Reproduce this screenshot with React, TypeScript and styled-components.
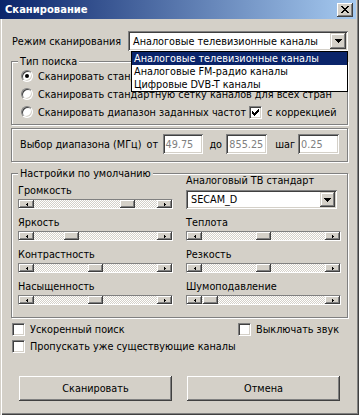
import React from 'react'
import styled, { createGlobalStyle } from 'styled-components'

const face = '#d4d0c8'
const shadow = '#808080'
const dark = '#404040'

const raised = `box-shadow: inset -1px -1px ${dark}, inset 1px 1px #fff, inset -2px -2px ${shadow};`
const sunken = `box-shadow: inset 1px 1px ${shadow}, inset -1px -1px #fff, inset 2px 2px ${dark}, inset -2px -2px ${face};`

const GlobalStyle = createGlobalStyle`
  html, body {
    margin: 0;
    padding: 0;
    background: #fff;
  }
  body {
    font-family: 'DejaVu Sans', sans-serif;
    font-size: 9.7px;
    color: #000;
    white-space: nowrap;
  }
  * {
    box-sizing: border-box;
  }
`

const Window = styled.div`
  width: 359px;
  height: 415px;
  padding: 0 3px 3px 0;
  background: ${face};
  box-shadow: inset 1px 0 ${face}, inset 2px 0 #fff, inset -1px -1px ${dark}, inset -2px -2px ${shadow};
  display: flex;
  flex-direction: column;
`

const TitleBar = styled.div`
  height: 19px;
  padding: 0 3px 0 5px;
  display: flex;
  align-items: center;
  background: linear-gradient(90deg, #0a246a, #a6caf0);
`

const TitleText = styled.span`
  color: #fff;
  font-weight: bold;
  font-size: 10px;
`

const CloseButton = styled.div`
  margin-left: auto;
  width: 16px;
  height: 14px;
  background: ${face};
  ${raised}
  display: flex;
  align-items: center;
  justify-content: center;
`

const ModeRow = styled.div`
  margin-top: 12px;
  padding-left: 12px;
  display: flex;
  align-items: center;
`

const ModeLabel = styled.span`
  width: 116px;
`

const Combo = styled.div<{ $width: number; $height: number }>`
  position: relative;
  width: ${({ $width }) => $width}px;
  height: ${({ $height }) => $height}px;
  padding: 2px 2px 2px 5px;
  background: #fff;
  ${sunken}
  display: flex;
  align-items: center;
`

const ComboText = styled.span`
  flex: 1;
`

const ComboButton = styled.div<{ $size: number }>`
  width: ${({ $size }) => $size}px;
  height: ${({ $size }) => $size}px;
  background: ${face};
  box-shadow: inset -1px -1px ${dark}, inset 1px 1px ${face}, inset -2px -2px ${shadow}, inset 2px 2px #fff;
  display: flex;
  align-items: center;
  justify-content: center;
`

const DropList = styled.div`
  position: absolute;
  top: 100%;
  left: 3px;
  width: 217px;
  border: 1px solid #000;
  background: #fff;
  z-index: 10;
`

const ListItem = styled.div<{ $selected?: boolean }>`
  height: 13px;
  line-height: 13px;
  padding-left: 2px;
  background: ${({ $selected }) => ($selected ? '#0a246a' : '#fff')};
  color: ${({ $selected }) => ($selected ? '#fff' : '#000')};
`

const Group = styled.div<{ $top: number }>`
  position: relative;
  margin: ${({ $top }) => $top}px 8px 0 11px;
  border: 1px solid ${shadow};
  box-shadow: inset 1px 1px #fff, 1px 1px #fff;
`

const Caption = styled.span`
  position: absolute;
  top: -7px;
  left: 6px;
  padding: 0 2px;
  line-height: 13px;
  background: ${face};
`

const SearchBody = styled.div`
  padding: 5px 9px 3px;
`

const OptionRow = styled.div`
  height: 18px;
  display: flex;
  align-items: center;
`

const Option = styled.label<{ $width?: number }>`
  display: flex;
  align-items: center;
  gap: 5px;
  width: ${({ $width }) => ($width ? `${$width}px` : 'auto')};
`

const RadioMark = styled.span<{ $checked?: boolean }>`
  position: relative;
  flex: none;
  width: 12px;
  height: 12px;
  border-radius: 50%;
  background: #fff;
  border: 1px solid;
  border-color: ${shadow} #fff #fff ${shadow};
  box-shadow: inset 1px 1px ${dark}, inset -1px -1px ${face};

  &::after {
    content: '';
    display: ${({ $checked }) => ($checked ? 'block' : 'none')};
    position: absolute;
    left: 3px;
    top: 3px;
    width: 4px;
    height: 4px;
    border-radius: 50%;
    background: #000;
  }
`

const CheckMark = styled.span`
  flex: none;
  width: 13px;
  height: 13px;
  background: #fff;
  border: 1px solid;
  border-color: ${shadow} #fff #fff ${shadow};
  box-shadow: inset 1px 1px ${dark}, inset -1px -1px ${face};
  display: flex;
  align-items: center;
  justify-content: center;
`

const RangeBody = styled.div`
  padding: 5px 8px 7px;
  display: flex;
  align-items: center;
  height: 32px;
`

const RangeLabel = styled.span`
  width: 127px;
`

const Unit = styled.span<{ $width: number; $gap?: number }>`
  width: ${({ $width }) => $width}px;
  margin-left: ${({ $gap }) => $gap || 0}px;
`

const NumBox = styled.div`
  width: 41px;
  height: 20px;
  padding: 0 3px;
  background: #fff;
  color: ${shadow};
  ${sunken}
  display: flex;
  align-items: center;
`

const SettingsBody = styled.div`
  padding: 1px 6px 12px;
  display: grid;
  grid-template-columns: 1fr 1fr;
  column-gap: 13px;
`

const Column = styled.div<{ $pad?: number }>`
  display: flex;
  flex-direction: column;
  padding-top: ${({ $pad }) => $pad || 0}px;
`

const FieldLabel = styled.div<{ $lh?: number }>`
  line-height: ${({ $lh }) => $lh || 13}px;
`

const StandardBlock = styled.div`
  display: flex;
  flex-direction: column;
  gap: 3px;
`

const SliderField = styled.div`
  margin-top: 7px;
  display: flex;
  flex-direction: column;
  gap: 2px;
`

const Track = styled.div`
  position: relative;
  height: 10px;
  border: 1px solid;
  border-color: ${shadow} #fff #fff ${shadow};
  background: repeating-conic-gradient(#fff 0 25%, ${face} 0 50%) 0 0 / 2px 2px;
  display: flex;
  justify-content: space-between;
`

const ScrollPart = styled.div`
  width: 15px;
  height: 8px;
  flex: none;
  background: ${face};
  ${raised}
  display: flex;
  align-items: center;
  justify-content: center;
`

const Thumb = styled(ScrollPart)`
  position: absolute;
  top: 0;
`

const Extras = styled.div`
  margin-top: 3px;
  padding-left: 12px;
`

const ExtraRow = styled.div`
  height: 17px;
  display: grid;
  grid-template-columns: 226px 1fr;
  align-items: center;
`

const ButtonRow = styled.div`
  margin-top: 21px;
  padding-left: 19px;
  display: flex;
  gap: 15px;
`

const PushButton = styled.div`
  width: 153px;
  height: 25px;
  background: ${face};
  box-shadow: inset -1px -1px ${dark}, inset 1px 1px #fff, inset -2px -2px ${shadow}, inset 2px 2px ${face};
  display: flex;
  align-items: center;
  justify-content: center;
`

const Pixels = ({ w, h, rows }: { w: number; h: number; rows: [number, number, number][] }) => (
  <svg width={w} height={h} viewBox={`0 0 ${w} ${h}`} shapeRendering="crispEdges">
    {rows.map(([x, y, len], i) => (
      <rect key={i} x={x} y={y} width={len} height={1} fill="#000" />
    ))}
  </svg>
)

const CloseGlyph = () => (
  <Pixels
    w={8}
    h={7}
    rows={[
      [0, 0, 2], [6, 0, 2],
      [1, 1, 2], [5, 1, 2],
      [2, 2, 4],
      [3, 3, 2],
      [2, 4, 4],
      [1, 5, 2], [5, 5, 2],
      [0, 6, 2], [6, 6, 2],
    ]}
  />
)

const DownArrow = () => (
  <Pixels w={7} h={4} rows={[[0, 0, 7], [1, 1, 5], [2, 2, 3], [3, 3, 1]]} />
)

const Tick = () => (
  <Pixels
    w={7}
    h={7}
    rows={[
      [6, 0, 1],
      [5, 1, 2],
      [0, 2, 1], [4, 2, 3],
      [0, 3, 2], [3, 3, 3],
      [0, 4, 5],
      [1, 5, 3],
      [2, 6, 1],
    ]}
  />
)

const LeftArrow = () => <Pixels w={2} h={3} rows={[[1, 0, 1], [0, 1, 2], [1, 2, 1]]} />
const RightArrow = () => <Pixels w={2} h={3} rows={[[0, 0, 1], [0, 1, 2], [0, 2, 1]]} />

const Radio = ({ checked, children, width }: { checked?: boolean; children: React.ReactNode; width?: number }) => (
  <Option $width={width}>
    <RadioMark $checked={checked} />
    <span>{children}</span>
  </Option>
)

const Check = ({ checked, children }: { checked?: boolean; children: React.ReactNode }) => (
  <Option>
    <CheckMark>{checked && <Tick />}</CheckMark>
    <span>{children}</span>
  </Option>
)

const Slider = ({ label, value }: { label: string; value: number }) => (
  <SliderField>
    <FieldLabel>{label}</FieldLabel>
    <Track>
      <ScrollPart>
        <LeftArrow />
      </ScrollPart>
      <Thumb style={{ left: `calc(15px + (100% - 45px) * ${value})` }} />
      <ScrollPart>
        <RightArrow />
      </ScrollPart>
    </Track>
  </SliderField>
)

const modes = ['Аналоговые телевизионные каналы', 'Аналоговые FM-радио каналы', 'Цифровые DVB-T каналы']

const App = () => {
  return (
    <>
      <GlobalStyle />
      <Window>
        <TitleBar>
          <TitleText>Сканирование</TitleText>
          <CloseButton>
            <CloseGlyph />
          </CloseButton>
        </TitleBar>

        <ModeRow>
          <ModeLabel>Режим сканирования</ModeLabel>
          <Combo $width={220} $height={20}>
            <ComboText>Аналоговые телевизионные каналы</ComboText>
            <ComboButton $size={16}>
              <DownArrow />
            </ComboButton>
            <DropList>
              {modes.map((m, i) => (
                <ListItem key={m} $selected={i === 0}>
                  {m}
                </ListItem>
              ))}
            </DropList>
          </Combo>
        </ModeRow>

        <Group $top={10}>
          <Caption>Тип поиска</Caption>
          <SearchBody>
            <OptionRow>
              <Radio checked>Сканировать стандартные каналы</Radio>
            </OptionRow>
            <OptionRow>
              <Radio>Сканировать стандартную сетку каналов для всех стран</Radio>
            </OptionRow>
            <OptionRow>
              <Radio width={228}>Сканировать диапазон заданных частот</Radio>
              <Check checked>с коррекцией</Check>
            </OptionRow>
          </SearchBody>
        </Group>

        <Group $top={3}>
          <RangeBody>
            <RangeLabel>Выбор диапазона (МГц)</RangeLabel>
            <Unit $width={16}>от</Unit>
            <NumBox>49.75</NumBox>
            <Unit $width={17} $gap={6}>до</Unit>
            <NumBox>855.25</NumBox>
            <Unit $width={23} $gap={8}>шаг</Unit>
            <NumBox>0.25</NumBox>
          </RangeBody>
        </Group>

        <Group $top={11}>
          <Caption>Настройки по умолчанию</Caption>
          <SettingsBody>
            <Column $pad={2}>
              <Slider label="Громкость" value={0.8} />
              <Slider label="Яркость" value={0.28} />
              <Slider label="Контрастность" value={0.5} />
              <Slider label="Насыщенность" value={0.5} />
            </Column>
            <Column>
              <StandardBlock>
                <FieldLabel $lh={12}>Аналоговый ТВ стандарт</FieldLabel>
                <Combo $width={151} $height={19}>
                  <ComboText>SECAM_D</ComboText>
                  <ComboButton $size={15}>
                    <DownArrow />
                  </ComboButton>
                </Combo>
              </StandardBlock>
              <Slider label="Теплота" value={0.5} />
              <Slider label="Резкость" value={0.5} />
              <Slider label="Шумоподавление" value={0.01} />
            </Column>
          </SettingsBody>
        </Group>

        <Extras>
          <ExtraRow>
            <Check>Ускоренный поиск</Check>
            <Check>Выключать звук</Check>
          </ExtraRow>
          <ExtraRow>
            <Check>Пропускать уже существующие каналы</Check>
          </ExtraRow>
        </Extras>

        <ButtonRow>
          <PushButton>Сканировать</PushButton>
          <PushButton>Отмена</PushButton>
        </ButtonRow>
      </Window>
    </>
  )
}

export default App
